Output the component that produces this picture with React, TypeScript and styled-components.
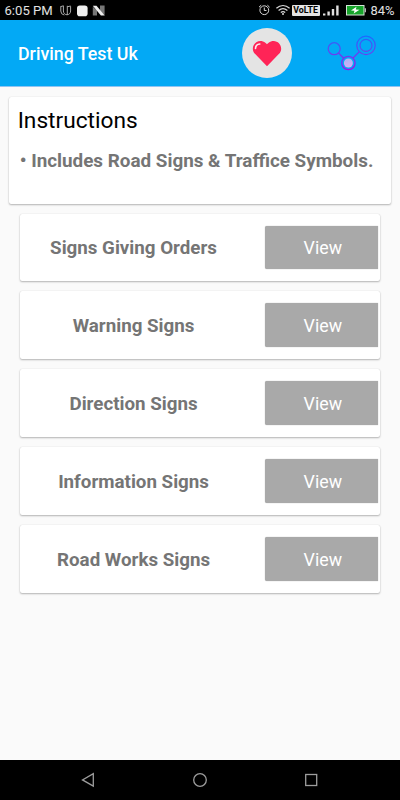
import React from "react";
import styled, { createGlobalStyle } from "styled-components";

const GlobalStyle = createGlobalStyle`
  * { box-sizing: border-box; }
  body { margin: 0; background: #fafafa; font-family: Roboto, "Noto Sans", sans-serif; }
`;

const Screen = styled.div`
  width: 400px;
  height: 800px;
  display: flex;
  flex-direction: column;
  overflow: hidden;
  background: #fafafa;
`;

const StatusBar = styled.header`
  height: 20px;
  flex: none;
  display: flex;
  align-items: center;
  padding: 1px 4.5px 0;
  background: #000;
  color: #e2e2e2;
  font-size: 13.1px;
  line-height: 20px;
  white-space: nowrap;
`;

const Clock = styled.span`
  width: 54.5px;
`;

const NotificationIcons = styled.svg`
  width: 50px;
  height: 20px;
  margin-right: auto;
`;

const StatusIcon = styled.svg<{ $width: number }>`
  flex: none;
  width: ${(p) => p.$width}px;
  height: 20px;
`;

const NetworkBadge = styled.span`
  width: 28px;
  height: 11px;
  margin: 0 3px 0 1px;
  border-radius: 1px;
  background: #e4e4e4;
  color: #000;
  font-size: 8.8px;
  font-weight: 700;
  line-height: 11.5px;
  text-align: center;
`;

const BatteryLevel = styled.span`
  width: 25px;
  margin-left: 3px;
  font-size: 12.9px;
`;

const AppBar = styled.nav`
  height: 67px;
  flex: none;
  display: flex;
  align-items: center;
  padding: 0 23.6px 0 18px;
  background: #03a9f5;
  border-bottom: 1px solid #90c4f2;
`;

const AppTitle = styled.h1`
  margin: 0 auto 0 0;
  padding-top: 2px;
  color: #fff;
  font-size: 17.8px;
  font-weight: 500;
  line-height: 24px;
`;

const FavoriteButton = styled.button`
  width: 50.5px;
  height: 50.5px;
  display: grid;
  place-items: center;
  margin-right: 35.2px;
  padding: 0;
  border: 0;
  border-radius: 50%;
  background: #e4e4e4;
`;

const Content = styled.main`
  flex: 1;
  padding: 9.5px 8.7px 0;
`;

const Card = styled.section`
  border-radius: 2px;
  background: #fff;
  box-shadow: 0 1px 2px rgba(0, 0, 0, 0.28), 0 0 1px rgba(0, 0, 0, 0.16);
`;

const InstructionsCard = styled(Card)`
  height: 107.7px;
  padding: 10px 9px 0;
`;

const Heading = styled.h2`
  margin: 0;
  color: #000;
  font-size: 22.7px;
  font-weight: 400;
  line-height: 28px;
`;

const Note = styled.p`
  margin: 15px 0 0 2px;
  color: #757575;
  font-size: 18.85px;
  font-weight: 700;
  line-height: 23px;
  white-space: nowrap;
`;

const CategoryList = styled.div`
  display: flex;
  flex-direction: column;
  gap: 10px;
  padding: 9.4px 11.3px 0;
`;

const CategoryCard = styled(Card)`
  height: 67.8px;
  display: flex;
  align-items: center;
  padding-right: 2px;
`;

const CategoryName = styled.h3`
  flex: 1;
  margin: 0;
  padding: 2px 17.5px 0 0;
  text-align: center;
  color: #757575;
  font-size: 18.75px;
  font-weight: 700;
  line-height: 22px;
`;

const ViewButton = styled.button`
  width: 113.4px;
  height: 43.8px;
  padding: 2px 0 0 3px;
  border: 0;
  border-radius: 2px 0 0 2px;
  background: #a9a9a9;
  box-shadow: 0 0 1px rgba(0, 0, 0, 0.4);
  color: #fff;
  font: 400 17.8px/22px Roboto, sans-serif;
`;

const NavigationBar = styled.footer`
  height: 40px;
  flex: none;
  display: flex;
  justify-content: space-between;
  padding: 0 78px 0 77px;
  background: #000;
`;

const categories = [
  "Signs Giving Orders",
  "Warning Signs",
  "Direction Signs",
  "Information Signs",
  "Road Works Signs",
];

const Notifications = () => (
  <NotificationIcons viewBox="0 0 50 20">
    <path d="M1.8 5.2V10a4 4 0 0 0 3.5 4M4.4 4.8V10c0 5 7.2 5 7.2 0V5.2M8.3 4.8V14M4.4 4.8l-2.6.8M11.6 5l-3.3.8" fill="none" stroke="#a9a9a9" strokeWidth="1" />
    <rect x="18" y="4.4" width="10.6" height="10.8" rx="2.8" fill="#efefef" />
    <path d="M33.8 14.5V5.8L38 9.5v5zM45.6 4.5V14L41 9.5v-5z" fill="#777" />
    <path d="M33.8 4.7h3.7l8.3 9.8h-3.9z" fill="#eee" />
  </NotificationIcons>
);

const AlarmIcon = () => (
  <StatusIcon $width={17} viewBox="0 0 17 20" fill="none" stroke="#d9d9d9" strokeWidth="1">
    <circle cx="6.3" cy="9.2" r="4.4" />
    <path d="M6.3 6.5v3h2.2M1 6.2l2.2-2M11.6 6.2l-2.2-2" />
  </StatusIcon>
);

const WifiIcon = () => (
  <StatusIcon $width={16} viewBox="0 0 16 20" fill="none" stroke="#d9d9d9" strokeWidth="1.2">
    <path d="M1.4 7.3c4-3.6 9.2-3.6 13.2 0M3.6 9.5c2.8-2.4 6-2.4 8.8 0M5.8 11.5c1.4-1.1 3-1.1 4.4 0" />
    <circle cx="8" cy="13" r="1" fill="#d9d9d9" stroke="none" />
  </StatusIcon>
);

const SignalIcon = () => (
  <StatusIcon $width={23} viewBox="0 0 23 20" fill="#e0e0e0">
    <path d="M0 12.5h2.4v2H0zM4.4 10.5h2.4v4H4.4zM8.8 8h2.4v6.5H8.8zM13.2 4.5h2.4v10h-2.4z" />
  </StatusIcon>
);

const BatteryIcon = () => (
  <StatusIcon $width={22} viewBox="0 0 22 20">
    <rect x=".5" y="4.5" width="17.5" height="9.5" fill="#17a52b" stroke="#d5e3d7" />
    <path d="M19.3 7.2v4" stroke="#ccc" strokeWidth="1.2" />
    <path d="M10.5 5.7 5 9.5l3.5.2-.8 2.8 5.8-3.8-3.7-.3z" fill="#fff" />
  </StatusIcon>
);

const HeartIcon = () => (
  <svg width="30" height="30" viewBox="0 0 30 30">
    <path d="M15 28.2 3.2 16.1C-2.8 10 3.6.9 11 3.5c1.8.6 3.1 1.7 4 2.8.9-1.1 2.2-2.2 4-2.8 7.4-2.6 13.8 6.5 7.8 12.6z" fill="#ff2457" />
    <path d="M3.5 10.5C3.6 7.8 5.2 6.2 7.8 6" fill="none" stroke="#ffe9ed" strokeWidth="1.6" strokeLinecap="round" />
  </svg>
);

const NodesIcon = () => (
  <svg width="49" height="36" viewBox="0 0 49 36">
    <defs>
      <linearGradient id="stroke" gradientUnits="userSpaceOnUse" x1="0" y1="0" x2="0" y2="36">
        <stop offset="0" stopColor="#176cff" />
        <stop offset=".4" stopColor="#5a4cf0" />
        <stop offset="1" stopColor="#aa08ec" />
      </linearGradient>
      <linearGradient id="center" x1="0" y1="0" x2="0" y2="1">
        <stop offset="0" stopColor="#a7b5f5" />
        <stop offset="1" stopColor="#d8aaf4" />
      </linearGradient>
    </defs>
    <g fill="none" stroke="url(#stroke)" strokeWidth="1.3">
      <circle cx="7.2" cy="13.7" r="6" />
      <circle cx="39" cy="10.4" r="9.2" />
      <circle cx="39" cy="10.4" r="6" />
      <circle cx="21.4" cy="28" r="6.7" />
      <path d="m11.5 18 5.2 5.2M32 17l-6 6" />
    </g>
    <circle cx="21.4" cy="28" r="4.5" fill="url(#center)" />
  </svg>
);

export default function App() {
  return (
    <>
      <GlobalStyle />
      <Screen>
        <StatusBar>
          <Clock>6:05 PM</Clock>
          <Notifications />
          <AlarmIcon />
          <WifiIcon />
          <NetworkBadge>VoLTE</NetworkBadge>
          <SignalIcon />
          <BatteryIcon />
          <BatteryLevel>84%</BatteryLevel>
        </StatusBar>
        <AppBar>
          <AppTitle>Driving Test Uk</AppTitle>
          <FavoriteButton aria-label="Favorites">
            <HeartIcon />
          </FavoriteButton>
          <NodesIcon />
        </AppBar>
        <Content>
          <InstructionsCard>
            <Heading>Instructions</Heading>
            <Note>• Includes Road Signs &amp; Traffice Symbols.</Note>
          </InstructionsCard>
          <CategoryList>
            {categories.map((name) => (
              <CategoryCard key={name}>
                <CategoryName>{name}</CategoryName>
                <ViewButton>View</ViewButton>
              </CategoryCard>
            ))}
          </CategoryList>
        </Content>
        <NavigationBar>
          <svg width="22" height="40" viewBox="0 0 22 40" fill="none" stroke="#9d9d9d" strokeWidth="1.3">
            <path d="M16.3 13.7v12.4L5.5 19.9z" />
          </svg>
          <svg width="22" height="40" viewBox="0 0 22 40" fill="none" stroke="#9d9d9d" strokeWidth="1.3">
            <circle cx="11" cy="20" r="6.3" />
          </svg>
          <svg width="22" height="40" viewBox="0 0 22 40" fill="none" stroke="#9d9d9d" strokeWidth="1.3">
            <rect x="5.7" y="14.5" width="11" height="11" />
          </svg>
        </NavigationBar>
      </Screen>
    </>
  );
}
